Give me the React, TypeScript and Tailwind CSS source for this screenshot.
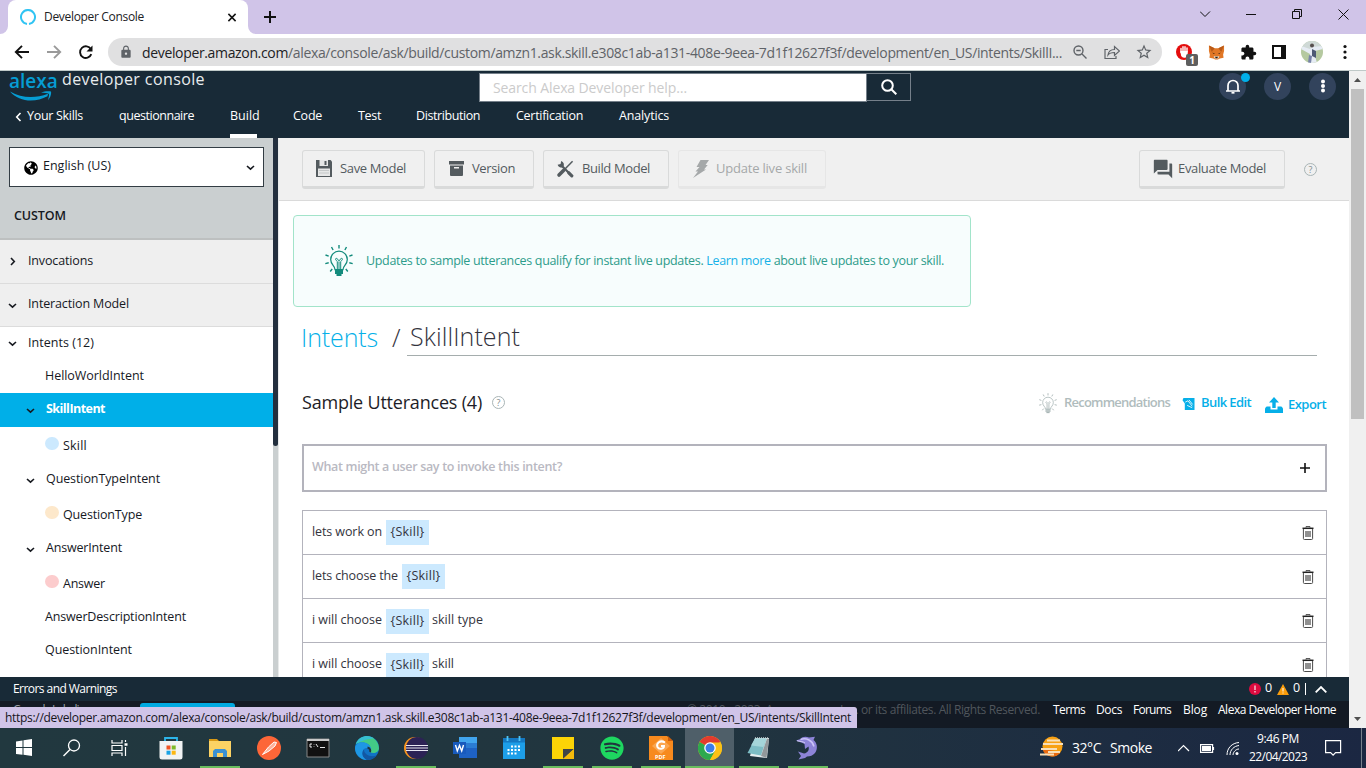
import React, { useLayoutEffect, useRef, useState } from "react";
import { MdLock, MdExtension, MdQuestionAnswer, MdStarBorder } from "react-icons/md";
import { FaGlobeAmericas, FaSpotify } from "react-icons/fa";

type TProps = { w: number; className?: string; children: React.ReactNode };

/* A single line of text whose tracking is tuned so that it fills a given width. */
function T({ w, className = "", children }: TProps) {
  const ref = useRef<HTMLSpanElement>(null);
  const [tracking, setTracking] = useState(0);
  useLayoutEffect(() => {
    const el = ref.current;
    if (!el) return;
    el.style.letterSpacing = "0px";
    const natural = el.getBoundingClientRect().width;
    const n = (el.textContent || "x").length;
    const next = (w - natural) / n;
    el.style.letterSpacing = `${next}px`;
    setTracking(next);
  }, [w]);
  return (
    <span ref={ref} className={`inline-block shrink-0 whitespace-pre ${className}`} style={{ letterSpacing: `${tracking}px` }}>
      {children}
    </span>
  );
}

function Chevron({ dir, className = "" }: { dir: "down" | "right" | "up" | "left"; className?: string }) {
  const d = {
    down: "M1 3 4.5 6.200 8 3",
    up: "M1 6.2 4.5 2.9 8 6.2",
    right: "M3 1 6.3 4.5 3 8",
    left: "M6.500 0.5 2.7 4.5 6.500 8.5",
  }[dir];
  return (
    <svg viewBox="0 0 9 9" className={`h-[9px] w-[9px] shrink-0 ${className}`} fill="none" stroke="currentColor" strokeWidth="1.6">
      <path d={d} />
    </svg>
  );
}

function Bulb({ className = "" }: { className?: string }) {
  return (
    <svg viewBox="0 0 28 32" className={className} fill="none" stroke="currentColor" strokeWidth="1.25">
      <path d="M10 24.5c0-4-4.300-4.500-4.300-10a8.300 8.300 0 0 1 16.600 0c0 5.500-4.300 6-4.300 10z" />
      <path d="M12.300 24v-7.500c-4-3.200 0-4.500 1-1.200l.7 1 .7-1c1-3.300 5-2 1 1.200V24M14 17v7" strokeWidth="1" />
      <path d="M10 26h8M10 28h8" strokeWidth="1.800" />
      <path d="M11.500 30h5" strokeWidth="2" />
      <path d="M14 0v3.500M6.500 2l1.600 3M21.500 2l-1.600 3M.5 10l3.200 1.200M27.500 10l-3.200 1.200M.3 18.600l3.400-.8M27.700 18.600l-3.400-.8M5.200 26.500l2-2.500M22.800 26.500l-2-2.500" strokeWidth="1.400" />
    </svg>
  );
}

function Help() {
  return (
    <span className="flex h-[13px] w-[13px] shrink-0 items-center justify-center rounded-full border border-[#a9b5b6] text-[9px] leading-none text-[#7f8c8e]">?</span>
  );
}

function Trash() {
  return (
    <svg viewBox="0 0 12 14" className="h-[14px] w-[12px] shrink-0" fill="none" stroke="#4a4a4a">
      <path d="M4 1.500V.6h4v.9" strokeWidth="1" />
      <path d="M.5 2.300h11" stroke="#222" strokeWidth="1.500" />
      <path d="M1.400 3v9.500a1 1 0 0 0 1 1h7.200a1 1 0 0 0 1-1V3" strokeWidth="1" />
      <path d="M4 5v6M6 5v6M8 5v6" stroke="#222" strokeWidth="1" />
    </svg>
  );
}

function TabStrip() {
  return (
    <div className="flex h-[34px] shrink-0 items-stretch bg-[#d0c4e8]">
      <svg viewBox="0 0 8 34" className="h-[34px] w-[8px]"><path d="M8 26v8H0a8 8 0 0 0 8-8z" fill="#fff" /></svg>
      <div className="flex w-[240px] items-center rounded-t-[8px] bg-white pl-[12px]">
        <svg viewBox="0 0 16 16" className="h-4 w-4" fill="none" stroke="#31c4f3" strokeWidth="2">
          <path d="M7 14.900a7 7 0 1 1 2 0" />
        </svg>
        <T w={100} className="ml-[8px] text-[12px] text-[#202124]">Developer Console</T>
        <svg viewBox="0 0 10 10" className="ml-[83px] h-[9px] w-[10px]" stroke="#111" strokeWidth="1.700"><path d="M1 1l8 8M9 1l-8 8" /></svg>
      </div>
      <svg viewBox="0 0 8 34" className="h-[34px] w-[8px]"><path d="M0 26v8h8a8 8 0 0 1-8-8z" fill="#fff" /></svg>
      <svg viewBox="0 0 12 34" className="ml-[8px] h-[34px] w-[12px]" stroke="#111" strokeWidth="2"><path d="M0 17h12M6 11v12" /></svg>
      <div className="grow" />
      <svg viewBox="0 0 150 34" className="mr-[16px] h-[34px] w-[150px]" fill="none" stroke="#111" strokeWidth="1">
        <path d="M0 11.500l5 5 5-5M46 14.500h10M92.500 11.500h7v7h-7zM94.500 11.500v-2h7v7h-2M138.500 9.500l10 10M148.500 9.500l-10 10" />
      </svg>
    </div>
  );
}

function AddressBar() {
  return (
    <div className="flex h-[36px] shrink-0 items-center bg-white">
      <svg viewBox="0 0 84 16" className="ml-[14px] h-4 w-[84px]" fill="none" stroke="#111" strokeWidth="1.900">
        <path d="M15 8H2M8 1.800 1.800 8 8 14.200" />
        <path d="M33 8h13M40 1.800 46.200 8 40 14.200" stroke="#9a9a9a" />
        <path d="M77.300 10.200a5.800 5.800 0 1 1-.4-5" />
        <path d="M78.500 1.500v6h-6z" fill="#111" stroke="none" />
      </svg>
      <div className="ml-[10px] flex h-[28px] w-[1054px] items-center rounded-full bg-[#e0e0e1] pl-[11px] text-[#5f6368]">
        <MdLock className="h-[14px] w-[14px]" />
        <T w={920} className="ml-[9px] text-[14px]"><span className="text-[#202124]">developer.amazon.com</span>/alexa/console/ask/build/custom/amzn1.ask.skill.e308c1ab-a131-408e-9eea-7d1f12627f3f/development/en_US/intents/SkillI...</T>
        <svg viewBox="0 0 14 14" className="ml-[11px] h-[14px] w-[14px]" fill="none" stroke="currentColor" strokeWidth="1.400"><circle cx="5.500" cy="5.500" r="4.500" /><path d="M9 9l4.500 4.500M3.300 5.500h4.400" /></svg>
        <svg viewBox="0 0 16 16" className="ml-[17px] h-4 w-4" fill="none" stroke="currentColor" strokeWidth="1.200"><path d="M4 5.500H1v9h11V12M4 11c.5-4 3-5.500 6.500-5.500V2.500l5 4.500-5 4.500v-3C7.500 8.500 5.500 9 4 11z" /></svg>
        <MdStarBorder className="ml-[15px] h-[18px] w-[18px]" />
      </div>
      <div className="relative ml-[14px] h-4 w-4">
        <svg viewBox="0 0 16 16" className="h-4 w-4"><circle cx="8" cy="8" r="8" fill="#e40d0d" /><path d="M5 8.500V4.500M7 7V2.800M9 7V2.800M11 8V4" stroke="#fff" strokeWidth="1.400" strokeLinecap="round" /><path d="M4.300 7h7.400v3.500a3.500 3.500 0 0 1-6.500 1.500z" fill="#fff" /></svg>
        <span className="absolute top-[10px] left-[10px] flex h-[12px] w-[12px] items-center justify-center rounded-[2px] bg-[#5e5e5e] text-[10px] font-bold text-white">1</span>
      </div>
      <svg viewBox="0 0 18 16" className="ml-[16px] h-4 w-[17px]">
        <path d="M1 1l6 3h4l6-3v6l-1 4 .5 3-4 1-2 1H7.500l-2-1-4-1L2 11 1 7z" fill="#e17726" />
        <path d="M1 1l6 3-3 4zM17 1l-6 3 3 4z" fill="#b85a18" />
        <path d="M4.500 8.500l3 1.500H6zM13.500 8.500l-3 1.500H12z" fill="#2b1a10" />
        <path d="M6 12.500h6l-1 2.500H7z" fill="#e9dccb" /><path d="M7.500 13h3l-.5 1.500H8z" fill="#222" />
      </svg>
      <MdExtension className="ml-[15px] h-[17px] w-[17px] text-[#111]" />
      <svg viewBox="0 0 14 14" className="ml-[15px] h-[14px] w-[14px]"><path d="M1 1h12v12H1z" fill="#fff" stroke="#111" strokeWidth="2" /><path d="M9 0h5v14H9z" fill="#111" /></svg>
      <svg viewBox="0 0 22 22" className="ml-[15px] h-[22px] w-[22px]">
        <clipPath id="avatar"><circle cx="11" cy="11" r="11" /></clipPath>
        <g clipPath="url(#avatar)"><path d="M0 0h22v22H0z" fill="#b5c9a0" /><path d="M0 0h22v8H0z" fill="#cfd9d6" /><path d="M0 5l9 3 2-2 11-1v3l-8 2v5l2 7H8l1-9-9-5z" fill="#e6ecf4" /><circle cx="11" cy="4.500" r="2" fill="#57504e" /><path d="M11 8l4 2v7l-4-2z" fill="#4d5a74" /><path d="M8 14l3 1-1 7H7z" fill="#7883a8" /></g>
      </svg>
      <svg viewBox="0 0 4 16" className="ml-[20px] h-4 w-[4px]" fill="#111"><circle cx="2" cy="2.500" r="1.600" /><circle cx="2" cy="8" r="1.600" /><circle cx="2" cy="13.500" r="1.600" /></svg>
    </div>
  );
}

function SiteHeader() {
  return (
    <header className="h-[67px] shrink-0 bg-[#182a37] text-white">
      <div className="flex h-[32px] items-start">
        <div className="ml-[8px] flex w-[46px] flex-col text-[#069dd4]">
          <T w={45} className="ml-[1px] h-[19px] text-[19px] leading-[20px] font-semibold">alexa</T>
          <svg viewBox="0 0 44 10" className="mt-[1px] ml-[2px] h-[10px] w-[44px]" fill="currentColor"><path d="M0 .5C12 7.300 25 7.500 38 2.800L37.500 5.200C25 12 9 11 0 .5z" /><path d="M31 1.500C35-.2 39 0 41 .5 41.500 3 40.500 6.500 38 9.200 39 5.500 39.300 3.700 38.700 2.700 37.500 1.900 34 1.900 31 1.500z" /></svg>
        </div>
        <T w={143} className="-mt-px ml-[8px] text-[16px] leading-[18px] text-[#e8ecee]">developer console</T>
        <div className="mt-[2px] ml-[274px] flex h-[29px] w-[388px] items-center border border-[#75808a] bg-white pl-[13px] text-[#cbcbcb]">
          <T w={194} className="-mt-px text-[14px]">Search Alexa Developer help…</T>
        </div>
        <div className="mt-[2px] flex h-[28px] w-[44px] items-center justify-center border border-l-0 border-[#75808a]">
          <svg viewBox="0 0 16 16" className="h-4 w-4" fill="none" stroke="#fff" strokeWidth="2"><circle cx="6.500" cy="6.500" r="5.300" /><path d="M10.300 10.300l5 5" /></svg>
        </div>
        <div className="relative mt-[2px] ml-[308px] flex h-[27px] w-[27px] items-center justify-center rounded-full bg-[#32435c]">
          <svg viewBox="0 0 14 15" className="-mt-px h-[15px] w-[14px]" fill="none" stroke="#fff" strokeWidth="1.700"><path d="M0 12h14M2 12V6.500a5 5 0 0 1 10 0V12" /><path d="M5.500 13.800h3" /></svg>
          <span className="absolute top-0 left-[22px] h-[9px] w-[9px] rounded-full bg-[#00b0ea]" />
        </div>
        <div className="mt-[2px] ml-[18px] flex h-[27px] w-[27px] items-center justify-center rounded-full bg-[#32435c] text-[12px]">V</div>
        <div className="mt-[2px] ml-[18px] flex h-[27px] w-[27px] items-center justify-center rounded-full bg-[#32435c]">
          <svg viewBox="0 0 4 14" className="-mt-px h-[14px] w-[4px]" fill="#fff"><circle cx="2" cy="2.500" r="2" /><circle cx="2" cy="7" r="2" /><circle cx="2" cy="11.500" r="2" /></svg>
        </div>
      </div>
      <nav className="flex h-[35px] items-start text-[12.500px] leading-[25px]">
        <Chevron dir="left" className="mt-[9px] ml-[14px] h-[10px]" />
        <T w={56} className="ml-[4px]">Your Skills</T>
        <T w={75} className="ml-[36px]">questionnaire</T>
        <div className="ml-[36px] flex h-[35px] w-[27px] flex-col justify-between">
          <T w={27}>Build</T>
          <div className="h-[4px] bg-white" />
        </div>
        <T w={29} className="ml-[36px]">Code</T>
        <T w={23} className="ml-[36px]">Test</T>
        <T w={64} className="ml-[35px]">Distribution</T>
        <T w={67} className="ml-[36px]">Certification</T>
        <T w={50} className="ml-[36px]">Analytics</T>
      </nav>
    </header>
  );
}

function Intent({ label, w, h, open, slot }: { label: string; w: number; h: string; open?: boolean; slot?: string }) {
  return (
    <div className={`flex items-center ${h}`}>
      {open && <Chevron dir="down" className="mt-px ml-[26px]" />}
      {slot && <span className={`-mt-[4px] ml-[45px] h-[13px] w-[14px] rounded-full ${slot}`} />}
      <T w={w} className={open ? "ml-[11px]" : slot ? "mt-[2px] ml-[4px]" : "mt-px ml-[45px]"}>{label}</T>
    </div>
  );
}

function Sidebar() {
  return (
    <aside className="flex w-[279px] shrink-0 border-r border-[#e8eaea] text-[12.500px] text-[#16191f]">
      <div className="flex w-[273px] flex-col bg-white">
        <div className="h-[102px] shrink-0 border-b-2 border-[#bdc0c0] bg-[#cacfd0] pt-[9px]">
          <div className="ml-[9px] flex h-[40px] w-[255px] items-center border border-[#333d44] bg-white pl-[14px]">
            <FaGlobeAmericas className="mt-[1px] h-[14px] w-[14px] text-black" />
            <T w={68} className="-mt-[2px] ml-[5px]">English (US)</T>
            <Chevron dir="down" className="ml-[135px] h-[7px]" />
          </div>
          <T w={52} className="mt-[19px] ml-[14px] leading-[20px] font-semibold">CUSTOM</T>
        </div>
        <div className="flex h-[44px] shrink-0 items-center border-b border-[#dcdcdc] bg-[#efefef]">
          <Chevron dir="right" className="ml-[8px]" />
          <T w={65} className="ml-[11px] -mt-px">Invocations</T>
        </div>
        <div className="flex h-[43px] shrink-0 items-center border-b border-[#dcdcdc] bg-[#efefef]">
          <Chevron dir="down" className="ml-[8px]" />
          <T w={101} className="ml-[11px] -mt-px">Interaction Model</T>
        </div>
        <div className="flex h-[32px] items-center">
          <Chevron dir="down" className="ml-[8px]" />
          <T w={66} className="mt-px ml-[11px]">Intents (12)</T>
        </div>
        <Intent label="HelloWorldIntent" w={99} h="h-[33px] pt-px" />
        <div className="mt-px bg-[#00afe8] font-bold text-white [&_svg]:text-[#16191f]">
          <Intent label="SkillIntent" w={59} h="h-[34px] pb-[1px]" open />
        </div>
        <Intent label="Skill" w={24} h="h-[36px]" slot="bg-[#cce9fe]" />
        <Intent label="QuestionTypeIntent" w={114} h="h-[33px]" open />
        <Intent label="QuestionType" w={79} h="h-[36px]" slot="bg-[#fde8cb]" />
        <Intent label="AnswerIntent" w={76} h="h-[33px]" open />
        <Intent label="Answer" w={42} h="h-[36px]" slot="bg-[#fccccd]" />
        <Intent label="AnswerDescriptionIntent" w={141} h="h-[33px] pb-px" />
        <Intent label="QuestionIntent" w={87} h="h-[33px] pb-px" />
      </div>
      <div className="w-[5px] bg-[#cacfd0]"><div className="h-[308px] rounded-b-[3px] bg-[#232f3e]" /></div>
    </aside>
  );
}

function ToolButton({ icon, label, w, box, muted }: { icon: React.ReactNode; label: string; w: number; box: string; muted?: boolean }) {
  return (
    <button className={`flex h-[39px] shrink-0 items-center rounded-[3px] border border-b-[3px] ${box} ${muted ? "border-[#e6e6e6] text-[#a5a8a9]" : "border-[#d9dada] text-[#545b5f]"}`}>
      {icon}
      <T w={w} className="text-[13px]">{label}</T>
    </button>
  );
}

function Toolbar() {
  return (
    <div className="flex h-[63px] shrink-0 items-start border-b border-[#dadada] bg-[#f0f0f0] pt-[12px] pl-[23px]">
      <ToolButton box="w-[123px] pl-[13px]" w={66} label="Save Model" icon={
        <svg viewBox="0 0 16 17" className="mr-[8px] h-[17px] w-[16px]"><path d="M0 0h14.500l1.500 1.500V17H0z" fill="#545b5f" /><path d="M3.500 0h8.500v6H3.500z" fill="#e6e7e7" /><path d="M8.500 1h2v4h-2z" fill="#545b5f" /><path d="M2 8.500h12V16H2z" fill="#e6e7e7" /><path d="M3 10.500h10M3 13h10" stroke="#c5c8c9" /></svg>} />
      <ToolButton box="ml-[9px] w-[100px] pl-[14px]" w={43} label="Version" icon={
        <svg viewBox="0 0 15 15" className="mr-[8px] h-[15px] w-[15px]" fill="#545b5f"><path d="M0 0h15v3.500H0z" /><path d="M1 4.500h13V14a1 1 0 0 1-1 1H2a1 1 0 0 1-1-1z" /><path d="M5 6h5v1.500H5z" fill="#f0f0f0" /></svg>} />
      <ToolButton box="ml-[9px] w-[126px] pl-[12px]" w={68} label="Build Model" icon={
        <svg viewBox="0 0 18 18" className="mr-[8px] h-[18px] w-[18px]" fill="none" stroke="#545b5f"><path d="M5.500 5.500l9 9" strokeWidth="2.200" /><path d="M12.800 12.800l3 3" strokeWidth="3.200" strokeLinecap="round" /><path d="M5.200.9l-.6 3-3 .8a3.700 3.700 0 0 0 5.600 2.200A3.900 3.900 0 0 0 5.200.9z" fill="#545b5f" stroke="none" /><path d="M16.600 1.200 8 10" strokeWidth="1.500" /><path d="M7.500 10.500 3 15" strokeWidth="3.600" strokeLinecap="round" /></svg>} />
      <ToolButton muted box="ml-[9px] w-[148px] pl-[14px]" w={91} label="Update live skill" icon={
        <svg viewBox="0 0 16 18" className="mr-[7px] h-[18px] w-[16px]" fill="#a5a8a9"><path d="M7.500 0H16l-3.500 5h2.200L11 9.500h2L0 18l5-6.500H2.500L6.500 7H3.500z" /></svg>} />
      <ToolButton box="ml-[313px] w-[146px] pl-[12px]" w={88} label="Evaluate Model" icon={<MdQuestionAnswer className="mr-[4px] h-[22px] w-[22px]" />} />
      <div className="mt-[13px] ml-[19px]"><Help /></div>
    </div>
  );
}

const utterances = [
  { before: "lets work on", bw: 70, after: "", aw: 0, drop: "-mt-px" },
  { before: "lets choose the", bw: 86, after: "", aw: 0, drop: "-mt-px" },
  { before: "i will choose", bw: 70, after: "skill type", aw: 51, drop: "mt-px" },
  { before: "i will choose", bw: 70, after: "skill", aw: 22, drop: "mt-px" },
];

function IntentEditor() {
  return (
    <main className="flex w-[1070px] flex-col overflow-hidden bg-white">
      <Toolbar />
      <div className="mt-[14px] ml-[14px] flex h-[92px] w-[678px] shrink-0 items-center rounded-[4px] border border-[#a2e4ca] bg-[#f7fdfd] pl-[31px] text-[12.500px] text-[#2d9c8b]">
        <Bulb className="h-[32px] w-[28px] text-[#138b7c]" />
        <T w={578} className="ml-[13px]">Updates to sample utterances qualify for instant live updates. <span className="text-[#16b1e8]">Learn more</span> about live updates to your skill.</T>
      </div>
      <div className="ml-[22px] flex h-[49px] shrink-0 items-end text-[25px] leading-[37px] font-light">
        <T w={77} className="text-[#06b0e8]">Intents</T>
        <T w={9} className="ml-[14px] text-[#33333d]">/</T>
        <div className="ml-[6px] w-[910px] border-b border-[#a5adad] pl-[3px]"><T w={110} className="block text-[#33333d]">SkillIntent</T></div>
      </div>
      <div className="ml-[23px] flex h-[88px] shrink-0 items-center pt-[6px]">
        <T w={180} className="-mt-px text-[18px] text-[#1d1d27]">Sample Utterances (4)</T>
        <div className="-mt-px ml-[10px]"><Help /></div>
        <Bulb className="ml-[534px] h-[21px] w-[18px] text-[#a9b6b6]" />
        <T w={106} className="ml-[7px] text-[13px] font-semibold text-[#b0bcbd]">Recommendations</T>
        <svg viewBox="0 0 13 13" className="mt-[2px] ml-[12px] h-[12px] w-[13px]"><path d="M1 0h12v13H2.500V6L0 2.500z" fill="#06afe8" /><path d="M3 4.500 6 3l4.500 6M5 8l5.500 2.500M7 2l4 5" stroke="#fff" strokeWidth=".9" fill="none" /></svg>
        <T w={50} className="ml-[6px] text-[13px] font-semibold text-[#06afe8]">Bulk Edit</T>
        <svg viewBox="0 0 18 16" className="mt-[4px] ml-[14px] h-[16px] w-[18px]" fill="#06afe8"><path d="M9 0l5 5.500h-3.300V11H7.300V5.500H4z" /><path d="M0 12c0-1 1-2.500 2-2.500h3.500v3h7v-3H16c1 0 2 1.500 2 2.500v4H0z" /></svg>
        <T w={38} className="mt-[3px] ml-[5px] text-[13px] font-semibold text-[#06afe8]">Export</T>
      </div>
      <div className="ml-[23px] flex h-[48px] w-[1025px] shrink-0 items-center justify-between border-2 border-[#b3b3bc] pr-[15px] pl-[8px]">
        <T w={250} className="-mt-px text-[12.500px] font-semibold text-[#b9b9c2]">What might a user say to invoke this intent?</T>
        <svg viewBox="0 0 10 10" className="h-[10px] w-[10px]" stroke="#111" strokeWidth="1.600"><path d="M0 5h10M5 0v10" /></svg>
      </div>
      <div className="mt-[18px] ml-[23px] w-[1025px] shrink-0 border-x border-t border-[#b3b3bc] text-[12.500px] text-[#33333d]">
        {utterances.map((u, i) => (
          <div key={i} className="flex h-[44px] items-center border-b border-[#b3b3bc] pr-[12px] pl-[9px]">
            <T w={u.bw} className="-mt-px">{u.before}</T>
            <span className={`ml-[4px] flex h-[25px] w-[43px] items-center justify-center bg-[#cce9fe] ${u.drop}`}><T w={34}>{"{Skill}"}</T></span>
            {u.after && <T w={u.aw} className="-mt-px ml-[3px]">{u.after}</T>}
            <span className="ml-auto"><Trash /></span>
          </div>
        ))}
      </div>
    </main>
  );
}

function Footer() {
  return (
    <>
      <div className="flex h-[24px] shrink-0 items-center bg-[#182a37] text-[12px] text-white">
        <T w={104} className="-mt-px ml-[13px]">Errors and Warnings</T>
        <svg viewBox="0 0 12 12" className="ml-[1132px] h-[12px] w-[12px]"><circle cx="6" cy="6" r="6" fill="#dd0b3f" /><path d="M6 2.500v4.500M6 8v1.500" stroke="#fff" strokeWidth="1.100" /></svg>
        <T w={8} className="-mt-px ml-[4px] text-[12.500px]">0</T>
        <svg viewBox="0 0 12 11" className="ml-[4px] h-[11px] w-[12px]"><path d="M6 0l6 11H0z" fill="#fa9d0c" /><path d="M6 4v3.500M6 8.500v1" stroke="#fff" /></svg>
        <T w={8} className="-mt-px ml-[4px] text-[12.500px]">0</T>
        <span className="ml-[4px] h-[12px] w-px bg-white" />
        <svg viewBox="0 0 12 7" className="ml-[9px] h-[7px] w-[12px]" fill="none" stroke="#fff" strokeWidth="1.800"><path d="M.7 6.300 6 1l5.300 5.300" /></svg>
      </div>
      <footer className="flex h-[27px] shrink-0 items-start bg-[#131a24] text-[12px] leading-[18px] text-white">
        <T w={77} className="ml-[13px] text-[#9aa0a5]">Console Labeling</T>
        <div className="mt-[2px] ml-[50px] h-[20px] w-[95px] rounded-[3px] bg-[#00a9e0]" />
        <T w={353} className="ml-[452px] text-[#50565c]">© 2010 - 2023, Amazon.com, Inc. or its affiliates. All Rights Reserved.</T>
        <T w={32} className="ml-[13px]">Terms</T>
        <T w={26} className="ml-[11px]">Docs</T>
        <T w={38} className="ml-[11px]">Forums</T>
        <T w={24} className="ml-[12px]">Blog</T>
        <T w={118} className="ml-[11px]">Alexa Developer Home</T>
      </footer>
    </>
  );
}

function PageScrollbar() {
  return (
    <div className="flex w-[17px] flex-col items-center justify-between bg-[#f0f0f0]">
      <div className="flex flex-col items-center">
        <svg viewBox="0 0 17 18" className="h-[18px] w-[17px]"><path d="M5 11l3.500-4 3.500 4z" fill="#505050" /></svg>
        <div className="h-[330px] w-[13px] bg-[#c0c0c0]" />
      </div>
      <svg viewBox="0 0 17 17" className="h-[17px] w-[17px]"><path d="M5 6l3.500 4L12 6z" fill="#505050" /></svg>
    </div>
  );
}

function TaskItem({ children, active, on }: { children: React.ReactNode; active?: boolean; on?: boolean }) {
  return (
    <div className={`flex h-[40px] w-[49px] shrink-0 flex-col items-center ${active ? "bg-[#4f5f69]" : ""}`}>
      <svg viewBox="0 0 24 24" className="mt-[8px] h-[24px] w-[24px]" fill="none">{children}</svg>
      {on && <div className={`mt-[6px] h-[2px] bg-[#69bd5e] ${active ? "w-[49px]" : "w-[40px]"}`} />}
    </div>
  );
}

function Taskbar() {
  return (
    <div className="flex h-[40px] shrink-0 items-start bg-linear-to-r from-[#21383f] via-[#21353f] to-[#1b2742] text-white">
      <div className="-ml-[1px] flex">
        <TaskItem><path d="M4 5.500l6.500-1V11H4zM11.500 4.300 20 3v8h-8.500zM4 12h6.500v6.800L4 18zM11.500 12H20v8l-8.500-1.200z" fill="#fff" /></TaskItem>
        <TaskItem><circle cx="13" cy="9.500" r="5.500" stroke="#fff" strokeWidth="1.300" /><path d="M9 13.500 2.500 20" stroke="#fff" strokeWidth="1.400" /></TaskItem>
        <TaskItem><g stroke="#fff" strokeWidth="1.200"><path d="M2 4v3h10V4M2 20v-3h10v3M2 9.500h10v5H2zM15.500 4v2M15.500 11v9" /><path d="M14.500 8.500h3" strokeWidth="2.500" /></g></TaskItem>
        <TaskItem><path d="M6 6V2h12v4" stroke="#2cb5ea" strokeWidth="1.800" /><path d="M.5 5h23v16a2.500 2.500 0 0 1-2.500 2.500H3A2.500 2.500 0 0 1 .5 21z" fill="#f1f3f4" /><path d="M7.500 9.500h4v4h-4z" fill="#f05323" /><path d="M12.700 9.500h4v4h-4z" fill="#7db928" /><path d="M7.500 14.700h4v4h-4z" fill="#1aa3e5" /><path d="M12.700 14.700h4v4h-4z" fill="#fcb712" /></TaskItem>
        <TaskItem on><path d="M1 3h8l2 2H1z" fill="#d99a16" /><path d="M1 5h22v16H1z" fill="#fcd364" /><path d="M5 21v-6l2-2h10l2 2v6h-4v-4H9v4z" fill="#3b92d4" /></TaskItem>
        <TaskItem><circle cx="12" cy="12" r="12" fill="#fd6638" /><path d="M5.500 18.500l6-7.500 5.500-5 2.500.5-1.500 3.500-6 5z" stroke="#fff" strokeWidth="1" fill="#fdb39d" /></TaskItem>
        <TaskItem><path d="M1 3h22v18H1z" fill="#111" stroke="#888" /><path d="M1 3h22v2H1z" fill="#c9c9c9" /><path d="M6 8H4v3h2M8 8.500v.5M8 10.500v.5M10 8l2 3M14 11.500h5" stroke="#fff" strokeWidth=".9" /></TaskItem>
        <TaskItem><circle cx="12" cy="12" r="12" fill="#1173c6" /><path d="M.8 8A12 12 0 0 1 24 12c0 5-6 6-9 4 1-1 1-2 1-3C15 7 8 5 .8 8z" fill="#43cb86" /><path d="M.8 8C3 2 8 0 12 0c3 0 5 1 7 2.300C14 3 8 4 .8 8z" fill="#37bfd0" /><path d="M0 12C1 5 12 4 16 12c.5 1.500 0 3-1 4 1-4-6-6-7-1-1 4 1 7 4 9C5 24 0 18 0 12z" fill="#1e97e4" /><path d="M9 13.500c0 5 6 8 12.500 6C19 23 15 24 12 24c-5-2-6-8-3-10.500z" fill="#1257a3" /><path d="M15 16c.7-1.500 0-4-2.500-4.500" stroke="#203640" strokeWidth="2" /></TaskItem>
        <TaskItem on><circle cx="11" cy="12" r="11" fill="#f7941e" /><circle cx="13" cy="12" r="11" fill="#2c2255" /><path d="M2 9.500h22M2 12h22M2 14.500h22" stroke="#e8e6f2" strokeWidth="1.200" /></TaskItem>
        <TaskItem><path d="M6 1h18v21H6z" fill="#1e62c4" /><path d="M6 1h18v6H6z" fill="#41a5ee" /><path d="M6 7h18v5H6z" fill="#2b7cd3" /><path d="M0 6h13v12H0z" fill="#185abd" /><path d="M2.500 9l1.800 6 2.200-5.500L8.700 15l1.800-6" stroke="#fff" strokeWidth="1.400" /></TaskItem>
        <TaskItem><path d="M1 2h22v21H1z" fill="#1d9ee8" /><path d="M1 2h22v4.500H1z" fill="#1478c2" /><path d="M5.500 0v5M17.500 0v5" stroke="#50c5f5" strokeWidth="1.800" /><path d="M9 10.500h10M5.500 14h13.500M5.500 17.500h10" stroke="#fff" strokeWidth="2" strokeDasharray="2 1.500" /></TaskItem>
        <TaskItem on><path d="M1 1h22v22H1z" fill="#fcd406" /><path d="M12 23V13h11z" fill="#3f4347" /><path d="M12 23h11V13z" fill="#f3b90b" /></TaskItem>
        <TaskItem on><FaSpotify x={0} y={0} size={24} color="#1ed760" /></TaskItem>
        <TaskItem on><path d="M0 0h18l6 5v19H0z" fill="#f78a1e" /><path d="M19 0v5h5z" fill="#cc5d0c" /><path d="M12 2l9 8-9 8-9-8z" fill="#fba650" /><path d="M16 6.500c-5-3-9 1-7.500 4.500 1.500 3 6.500 2 6.500-1h-3" stroke="#fff" strokeWidth="2" /><text x="6" y="23" fontSize="5.500" fontWeight="700" fill="#fff">PDF</text></TaskItem>
        <TaskItem on active><circle cx="12" cy="12" r="12" fill="#fbc116" /><path d="M12 12 1.600 6A12 12 0 0 1 22.400 6z" fill="#e33b2e" /><path d="M1.600 6A12 12 0 0 0 12 24l5.200-9z" fill="#2da94f" /><path d="M12 6.500h10.700A12 12 0 0 1 12 24l5-9z" fill="#fbc116" /><circle cx="12" cy="12" r="5.800" fill="#fff" /><circle cx="12" cy="12" r="4.500" fill="#3b7de9" /></TaskItem>
        <TaskItem on><path d="M8 2h14l-2 20-17-2z" fill="#e4edef" /><path d="M8 2.500h11.500L14 19.500.5 17z" fill="#7dbdc5" /><path d="M8 2.500h11.500L16.500 11 4 9.500z" fill="#a5d5d9" /><path d="M14 20l6-17.500 2 .5-2.500 19z" fill="#92989b" /><path d="M8 1.800h13" stroke="#d8dcdd" strokeDasharray="1 1" /></TaskItem>
        <TaskItem on><path d="M0 4.500 4.500 3C6 .5 10 0 13 1.500L19 .8 17.500 4c4 3 4.500 9 1.500 13-2 2.500-5 3.500-8 3.500L9 22l-6.500 1.500L5 20 2 15.500 8 17.500c4-.5 5.500-4 4.500-7L9 13 8.500 8C6 6.500 3 6 0 4.500z" fill="#8d84d8" /><path d="M4.500 3.500c6-2 12 1 13.500 7" stroke="#cac3f7" strokeWidth="1.500" /><path d="M1 4.800c3 .5 6 .7 8 2.200" stroke="#e6e2fb" strokeWidth=".8" /></TaskItem>
      </div>
      <svg viewBox="0 0 24 24" className="mt-[8px] ml-[208px] h-[24px] w-[24px]"><circle cx="12.500" cy="10.500" r="10" fill="#f8a113" /><path d="M2.500 13a10 10 0 0 0 18 3z" fill="#e96a10" /><path d="M7 4.500h13M3 8h20M1 13h16M8 16h12M0 18.500h14" stroke="#f8dfb8" strokeWidth="1.800" /></svg>
      <T w={29} className="ml-[8px] text-[14px] leading-[40px]">32°C</T>
      <T w={42} className="ml-[9px] text-[14px] leading-[40px]">Smoke</T>
      <svg viewBox="0 0 62 40" className="ml-[26px] h-[40px] w-[62px]" fill="none" stroke="#fff" strokeWidth="1.200">
        <path d="M0 23l5.500-5.500L11 23" /><path d="M22.600 16.600h12v7.800h-12zM35.500 19v3" /><path d="M24 18h9v5h-9z" fill="#fff" stroke="none" />
        <path d="M49 27c0-7 5-12 12-12.500M52 27c0-5 4-9 9-9.500M55 27c0-3 3-6 6-6" strokeWidth="1" /><circle cx="59" cy="25.500" r="1.500" fill="#fff" stroke="none" />
      </svg>
      <div className="ml-[9px] flex w-[58px] flex-col items-center pt-[2px] text-[12px] leading-[18px]">
        <T w={42}>9:46 PM</T>
        <T w={58}>22/04/2023</T>
      </div>
      <svg viewBox="0 0 38 40" className="ml-[18px] h-[40px] w-[38px]" fill="none" stroke="#fff"><path d="M.6 12.600h15v12h-5l-2.500 2.500-2.500-2.500h-5z" strokeWidth="1.200" /><path d="M36.500 0v40" stroke="#77808c" /></svg>
    </div>
  );
}

export default function App() {
  return (
    <div className="relative flex h-[768px] w-[1366px] flex-col overflow-hidden bg-white font-['Open_Sans','Noto_Sans',sans-serif]">
      <TabStrip />
      <AddressBar />
      <div className="flex h-[658px] shrink-0 border-t border-[#bfc9c8]">
        <div className="flex w-[1349px] flex-col">
          <SiteHeader />
          <div className="flex h-[539px] shrink-0 overflow-hidden">
            <Sidebar />
            <IntentEditor />
          </div>
          <Footer />
        </div>
        <PageScrollbar />
      </div>
      <Taskbar />
      <div className="absolute top-[707px] left-0 flex h-[21px] w-[857px] items-center rounded-tr-[3px] bg-[#d0c4e8] pl-[5px] text-[12px] text-[#15151a]">
        <T w={846}>https://developer.amazon.com/alexa/console/ask/build/custom/amzn1.ask.skill.e308c1ab-a131-408e-9eea-7d1f12627f3f/development/en_US/intents/SkillIntent</T>
      </div>
    </div>
  );
}
